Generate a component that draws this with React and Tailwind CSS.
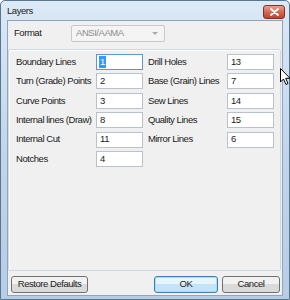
import React from "react";

const font = { fontFamily: '"Liberation Sans", Arial, sans-serif' };

function Field({ value, focused }) {
  return (
    <div
      className={
        "w-[47px] h-[16px] bg-white border flex items-center pl-[2px] " +
        (focused ? "border-[#5a98cf]" : "border-[#b9c1cc]")
      }
    >
      {focused ? (
        <span className="bg-[#3399ff] text-white leading-[12px] px-[1px]">{value}</span>
      ) : (
        <span className="pl-[1px]">{value}</span>
      )}
    </div>
  );
}

function Row({ label, value, focused, labelW }) {
  return (
    <div className="flex items-center h-[16px]">
      <div className={labelW}>{label}</div>
      <Field value={value} focused={focused} />
    </div>
  );
}

export default function App() {
  const left = [
    ["Boundary Lines", "1", true],
    ["Turn (Grade) Points", "2"],
    ["Curve Points", "3"],
    ["Internal lines (Draw)", "8"],
    ["Internal Cut", "11"],
    ["Notches", "4"],
  ];
  const right = [
    ["Drill Holes", "13"],
    ["Base (Grain) Lines", "7"],
    ["Sew Lines", "14"],
    ["Quality Lines", "15"],
    ["Mirror Lines", "6"],
  ];
  return (
    <div
      className="relative w-[290px] h-[300px] overflow-hidden text-[9.5px] tracking-[-0.45px] text-[#1a1a1a]"
      style={font}
    >
      <div className="w-full h-full flex flex-col bg-gradient-to-b from-[#dce9f6] via-[#c1d6ec] to-[#b6cde6] border border-[#5a7590] rounded-t-[5px]">
        {/* Title bar */}
        <div className="h-[19px] flex items-center justify-between pl-[6px] pr-[4px] shrink-0">
          <span className="text-[#1e1e1e] pt-[1px]">Layers</span>
          <div className="w-[22px] h-[14px] mt-[2px] rounded-[3px] border border-[#7a3528] bg-gradient-to-b from-[#e8a090] via-[#d36a55] to-[#c0412c] flex items-center justify-center">
            <svg width="9" height="8" viewBox="0 0 9 8">
              <path d="M1 1 L8 7 M8 1 L1 7" stroke="#fff" strokeWidth="1.8" strokeLinecap="round" />
            </svg>
          </div>
        </div>
        {/* Client area */}
        <div className="flex-1 ml-[6px] mr-[6px] mb-[3px] border border-[#8da5bf] bg-[#f0f0f0] flex flex-col">
          {/* Format */}
          <div className="flex items-center h-[17px] mt-[4px] pl-[6px]">
            <div className="w-[57px]">Format</div>
            <div className="w-[94px] h-[17px] border border-[#c9c9c9] rounded-[2px] bg-[#f4f4f4] flex items-center justify-between pl-[4px] pr-[6px] text-[#8c8c8c]">
              <span>ANSI/AAMA</span>
              <svg width="6" height="4" viewBox="0 0 6 4">
                <path d="M0 0 L6 0 L3 3 Z" fill="#a9a9a9" />
              </svg>
            </div>
          </div>
          {/* Group box */}
          <div className="ml-[0px] mr-[1px] mt-[7px] h-[222px] border border-[#d0d7de] rounded-[2px] shadow-[inset_1px_1px_0_#ffffff] flex pt-[4px] pl-[7px]">
            <div className="flex flex-col gap-[3.4px]">
              {left.map(([l, v, f]) => (
                <Row key={l} label={l} value={v} focused={f} labelW="w-[80px]" />
              ))}
            </div>
            <div className="flex flex-col gap-[3.4px] ml-[5px]">
              {right.map(([l, v]) => (
                <Row key={l} label={l} value={v} labelW="w-[79px]" />
              ))}
            </div>
          </div>
          {/* Buttons */}
          <div className="flex items-center mt-[5px] pl-[3px]">
            <button className="w-[77px] h-[17px] rounded-[3px] border border-[#707070] bg-gradient-to-b from-[#f2f2f2] from-50% to-[#dadada] to-50% flex items-center justify-center text-[#1a1a1a]">
              Restore Defaults
            </button>
            <button className="ml-[66px] w-[64px] h-[17px] rounded-[3px] border border-[#3c7fb1] bg-gradient-to-b from-[#e8f5fc] from-50% to-[#c2e4f6] to-50% shadow-[inset_0_0_0_1px_#a8dcf5] flex items-center justify-center text-[#1a1a1a]">
              OK
            </button>
            <button className="ml-[4px] w-[58px] h-[17px] rounded-[3px] border border-[#707070] bg-gradient-to-b from-[#f2f2f2] from-50% to-[#dadada] to-50% flex items-center justify-center text-[#1a1a1a]">
              Cancel
            </button>
          </div>
        </div>
      </div>
      {/* Mouse cursor */}
      <svg className="absolute left-[280px] top-[68px]" width="12" height="18" viewBox="0 0 12 18">
        <path d="M0.5 0.5 L0.5 14 L3.5 11 L6 16.5 L8 15.5 L5.7 10.3 L10 10.3 Z" fill="#fff" stroke="#000" strokeWidth="1" />
      </svg>
    </div>
  );
}
